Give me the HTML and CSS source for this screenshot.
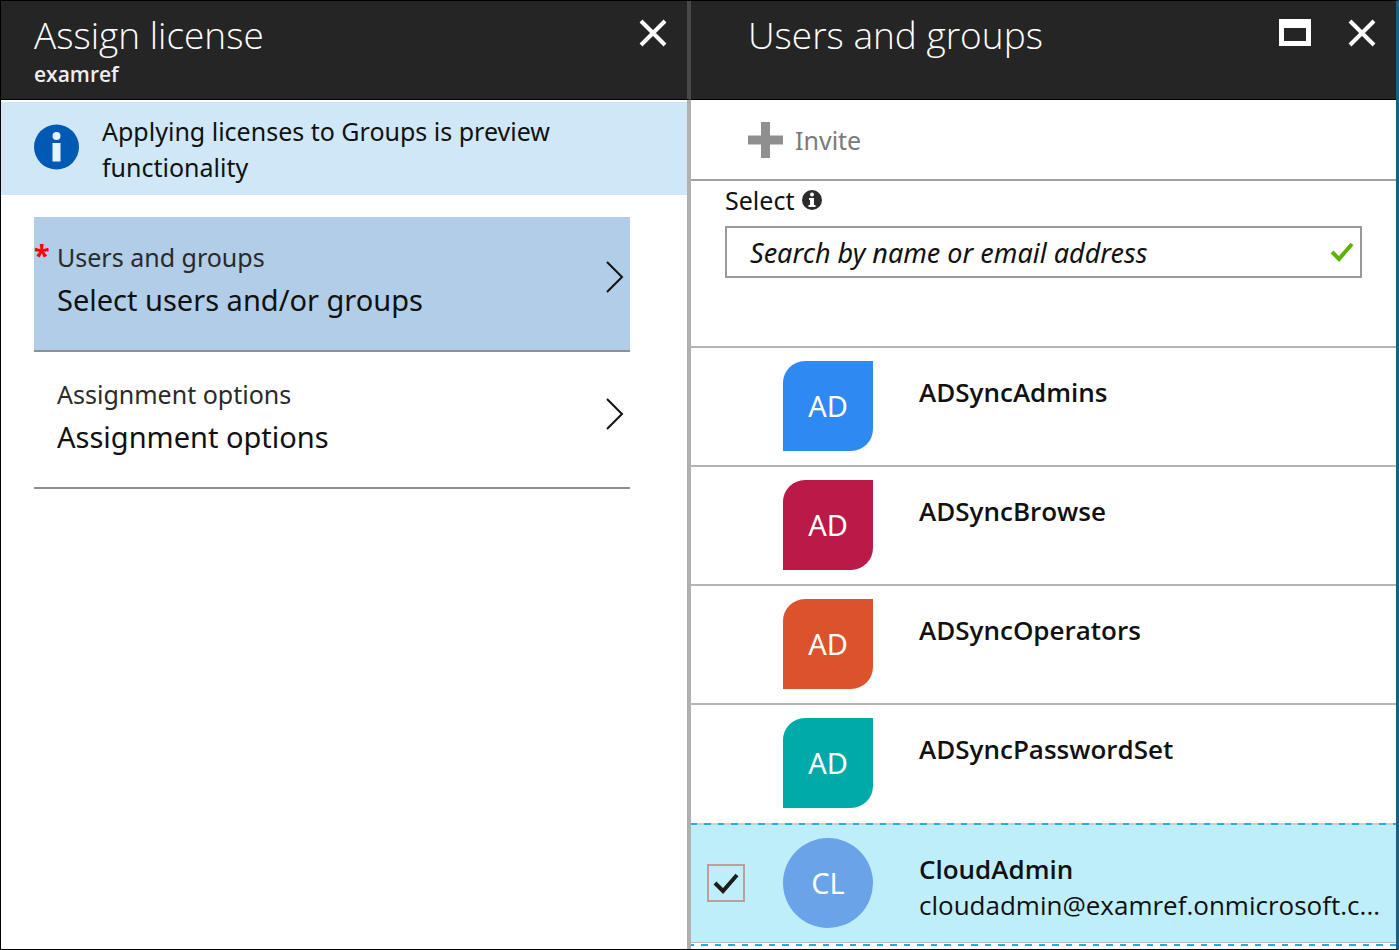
FILE: index.html
```html
<!DOCTYPE html>
<html lang="en">
<head>
<meta charset="utf-8">
<title>Assign license</title>
<link rel="stylesheet" href="styles.css">
</head>
<body>
<div class="portal">
  <section class="blade blade-left" aria-labelledby="license-title">
    <header class="blade-header">
      <div class="titles">
        <h1 class="title" id="license-title">Assign license</h1>
        <p class="subtitle">examref</p>
      </div>
      <div class="window-buttons">
        <button class="icon-button" type="button" aria-label="Close Assign license">
          <svg width="28" height="28" viewBox="0 0 28 28"><path d="M2 2 26 26M26 2 2 26" stroke="#fff" stroke-width="4" fill="none"/></svg>
        </button>
      </div>
    </header>
    <div class="notice">
      <svg class="notice-icon" width="46" height="46" viewBox="0 0 46 46"><circle cx="22.500" cy="23" r="22.500" fill="#0059b3"/><circle cx="22.500" cy="12" r="4" fill="#e6f2fd"/><path d="M18.500 19h8v18.500h-8z" fill="#e6f2fd"/></svg>
      <p class="notice-text">Applying licenses to Groups is preview functionality</p>
    </div>
    <nav class="steps">
      <button class="step step-active" type="button">
        <span class="required">*</span>
        <span class="step-text">
          <span class="step-label">Users and groups</span>
          <span class="step-value">Select users and/or groups</span>
        </span>
        <svg class="chevron" width="18" height="32" viewBox="0 0 18 32"><path d="M1 1 16 16 1 31" stroke="#111" stroke-width="2" fill="none"/></svg>
      </button>
      <button class="step" type="button">
        <span class="required"></span>
        <span class="step-text">
          <span class="step-label">Assignment options</span>
          <span class="step-value">Assignment options</span>
        </span>
        <svg class="chevron" width="18" height="32" viewBox="0 0 18 32"><path d="M1 1 16 16 1 31" stroke="#111" stroke-width="2" fill="none"/></svg>
      </button>
    </nav>
  </section>

  <section class="blade blade-right" aria-labelledby="users-title">
    <header class="blade-header">
      <div class="titles">
        <h2 class="title" id="users-title">Users and groups</h2>
      </div>
      <div class="window-buttons">
        <button class="icon-button" type="button" aria-label="Maximize">
          <svg width="32" height="28" viewBox="0 0 32 28"><path d="M0 0h32v27H0zM5 9v13h22V9z" fill="#fff" fill-rule="evenodd"/></svg>
        </button>
        <button class="icon-button" type="button" aria-label="Close Users and groups">
          <svg width="28" height="28" viewBox="0 0 28 28"><path d="M2 2 26 26M26 2 2 26" stroke="#fff" stroke-width="4" fill="none"/></svg>
        </button>
      </div>
    </header>
    <div class="toolbar">
      <button class="invite" type="button">
        <svg width="35" height="36" viewBox="0 0 35 36"><path d="M13 0h9v13.500h13v9H22V36h-9V22.500H0v-9h13z" fill="#8f8f8f"/></svg>
        Invite
      </button>
    </div>
    <div class="search">
      <label class="search-label" for="search">Select
        <svg width="20" height="20" viewBox="0 0 20 20"><circle cx="10" cy="10" r="10" fill="#2b2b2b"/><circle cx="10" cy="4.500" r="2" fill="#fff"/><path d="M7 8h5v7h1.500v2h-7v-2H8v-5H7z" fill="#fff"/></svg>
      </label>
      <div class="search-box">
        <input class="search-input" id="search" type="text" placeholder="Search by name or email address">
        <svg class="valid" width="24" height="20" viewBox="0 0 24 20"><path d="M2 10 9 17 22 2" stroke="#5db300" stroke-width="4" fill="none"/></svg>
      </div>
    </div>
    <ul class="people">
      <li class="person">
        <span class="pick"></span>
        <span class="avatar avatar-blue">AD</span>
        <span class="person-text"><span class="person-name">ADSyncAdmins</span></span>
      </li>
      <li class="person">
        <span class="pick"></span>
        <span class="avatar avatar-crimson">AD</span>
        <span class="person-text"><span class="person-name">ADSyncBrowse</span></span>
      </li>
      <li class="person">
        <span class="pick"></span>
        <span class="avatar avatar-orange">AD</span>
        <span class="person-text"><span class="person-name">ADSyncOperators</span></span>
      </li>
      <li class="person">
        <span class="pick"></span>
        <span class="avatar avatar-teal">AD</span>
        <span class="person-text"><span class="person-name">ADSyncPasswordSet</span></span>
      </li>
      <li class="person person-selected">
        <span class="pick">
          <input class="pick-input" id="pick-cloudadmin" type="checkbox" checked>
          <svg class="pick-mark" width="26" height="22" viewBox="0 0 26 22"><path d="M2 10 10 18 24 2" stroke="#1c1c1c" stroke-width="4" fill="none"/></svg>
        </span>
        <span class="avatar avatar-user">CL</span>
        <label class="person-text" for="pick-cloudadmin">
          <span class="person-name">CloudAdmin</span>
          <span class="person-mail">cloudadmin@examref.onmicrosoft.c...</span>
        </label>
      </li>
    </ul>
    <div class="list-end"></div>
  </section>
</div>
</body>
</html>
```
FILE: styles.css
```css
* {
  box-sizing: border-box;
}

body {
  margin: 0;
  font-family: "Noto Sans", "Open Sans", sans-serif;
  color: #111;
  background: #fff;
}

h1, h2, p, ul {
  margin: 0;
  padding: 0;
}

button {
  font: inherit;
  color: inherit;
  background: none;
  border: 0;
  padding: 0;
  cursor: pointer;
}

svg {
  display: block;
  flex: none;
}

.portal {
  display: grid;
  grid-template-columns: 690fr 705fr;
  min-height: 100vh;
  border: 1px solid #000;
  border-right: 3px solid #1c5f82;
}

.blade {
  min-width: 0;
}

.blade-left {
  border-right: 4px solid #b0b0b0;
}

.blade-header {
  display: flex;
  justify-content: space-between;
  height: 99px;
  padding: 8px 20px 0 33px;
  font-family: "Open Sans", "Noto Sans", sans-serif;
  color: #fff;
  background: #252525;
  border-bottom: 1px solid #000;
}

.blade-left .blade-header {
  margin-right: -4px;
  border-right: 4px solid #484848;
}

.blade-right .blade-header {
  padding-left: 57px;
}

.title {
  font-size: 37px;
  font-weight: 300;
  line-height: 52px;
}

.subtitle {
  font-size: 21px;
  font-weight: 600;
  line-height: 26px;
  color: #eee;
}

.window-buttons {
  display: flex;
  align-items: flex-start;
  gap: 37px;
  padding-top: 10px;
}

.notice {
  display: flex;
  align-items: flex-start;
  gap: 22px;
  margin-top: 2px;
  padding: 11px 33px 10px;
  background: #d0e7f8;
}

.notice-icon {
  margin-top: 11px;
}

.notice-text {
  max-width: 500px;
  font-size: 25px;
  line-height: 36px;
}

.steps {
  display: flex;
  flex-direction: column;
  padding: 22px 57px 0 33px;
}

.step {
  display: flex;
  align-items: flex-start;
  padding: 20px 6px 27px 0;
  text-align: left;
  border-bottom: 2px solid #909090;
}

.step + .step {
  padding-top: 22px;
}

.step-active {
  background: #b1cde7;
}

.required {
  width: 23px;
  font-size: 29px;
  font-weight: 700;
  line-height: 36px;
  color: #f00;
}

.step-text {
  display: flex;
  flex: 1;
  flex-direction: column;
}

.step-label {
  font-size: 25px;
  line-height: 40px;
  color: #2a2a2a;
}

.step-value {
  font-size: 29px;
  line-height: 46px;
}

.chevron {
  margin-top: 24px;
}

.toolbar {
  display: flex;
  align-items: center;
  height: 81px;
  padding-left: 57px;
  border-bottom: 2px solid #a0a0a0;
}

.invite {
  display: flex;
  align-items: center;
  gap: 12px;
  font-size: 25px;
  line-height: 36px;
  color: #7a7a7a;
}

.search {
  padding: 1px 34px 68px;
}

.search-label {
  display: flex;
  align-items: center;
  gap: 8px;
  font-size: 25px;
  line-height: 36px;
}

.search-box {
  display: flex;
  align-items: center;
  margin-top: 8px;
  padding: 0 6px 0 23px;
  border: 2px solid #999;
}

.search-input {
  flex: 1;
  min-width: 0;
  height: 48px;
  padding: 0;
  font: italic 27px "Noto Sans", "Open Sans", sans-serif;
  color: #111;
  background: none;
  border: 0;
  outline: 0;
}

.search-input::placeholder {
  color: #111;
  opacity: 1;
}

.people {
  list-style: none;
}

.person {
  display: flex;
  align-items: flex-start;
  padding: 13px 8px 14px 16px;
  border-top: 2px solid #b4b4b4;
}

.pick {
  position: relative;
  flex: none;
  width: 76px;
  padding-top: 26px;
}

.pick-input {
  display: block;
  width: 38px;
  height: 38px;
  margin: 0;
  appearance: none;
  border: 2px solid #bd9d9d;
}

.pick-mark {
  position: absolute;
  top: 35px;
  left: 6px;
  pointer-events: none;
}

.avatar {
  display: flex;
  flex: none;
  align-items: center;
  justify-content: center;
  width: 90px;
  height: 90px;
  padding-bottom: 2px;
  font-size: 29px;
  color: #fff;
  border-radius: 22px 0;
}

.avatar-blue {
  background: #2e89f2;
}

.avatar-crimson {
  background: #b91a48;
}

.avatar-orange {
  background: #dc522c;
}

.avatar-teal {
  background: #00aaa8;
}

.avatar-user {
  background: #6aa3e8;
  border-radius: 50%;
}

.person-text {
  display: flex;
  flex: 1;
  flex-direction: column;
  min-width: 0;
  padding: 13px 0 0 46px;
  font-family: "Open Sans", "Noto Sans", sans-serif;
  font-size: 26px;
  line-height: 36px;
}

.person-name {
  font-weight: 600;
}

.person-mail {
  font-weight: 500;
  white-space: nowrap;
}

.person-selected,
.list-end {
  background-repeat: no-repeat;
  background-size: 100% 2px;
}

.person-selected {
  margin-top: 1px;
  padding-top: 15px;
  background-color: #beeefa;
  background-image: repeating-linear-gradient(90deg, #1fb0e6 0 6px, #c9cfcc 6px 13px, #1fb0e6 13px 20px, #c9cfcc 20px 27px);
  border-top: 0;
  border-bottom: 1px solid #c9b8b0;
}

.list-end {
  height: 2px;
  margin-top: 1px;
  background-image: repeating-linear-gradient(90deg, #1fb0e6 0 3px, #fff 3px 10px, #1fb0e6 10px 17px, #fff 17px 24px, #1fb0e6 24px 27px);
}
```
